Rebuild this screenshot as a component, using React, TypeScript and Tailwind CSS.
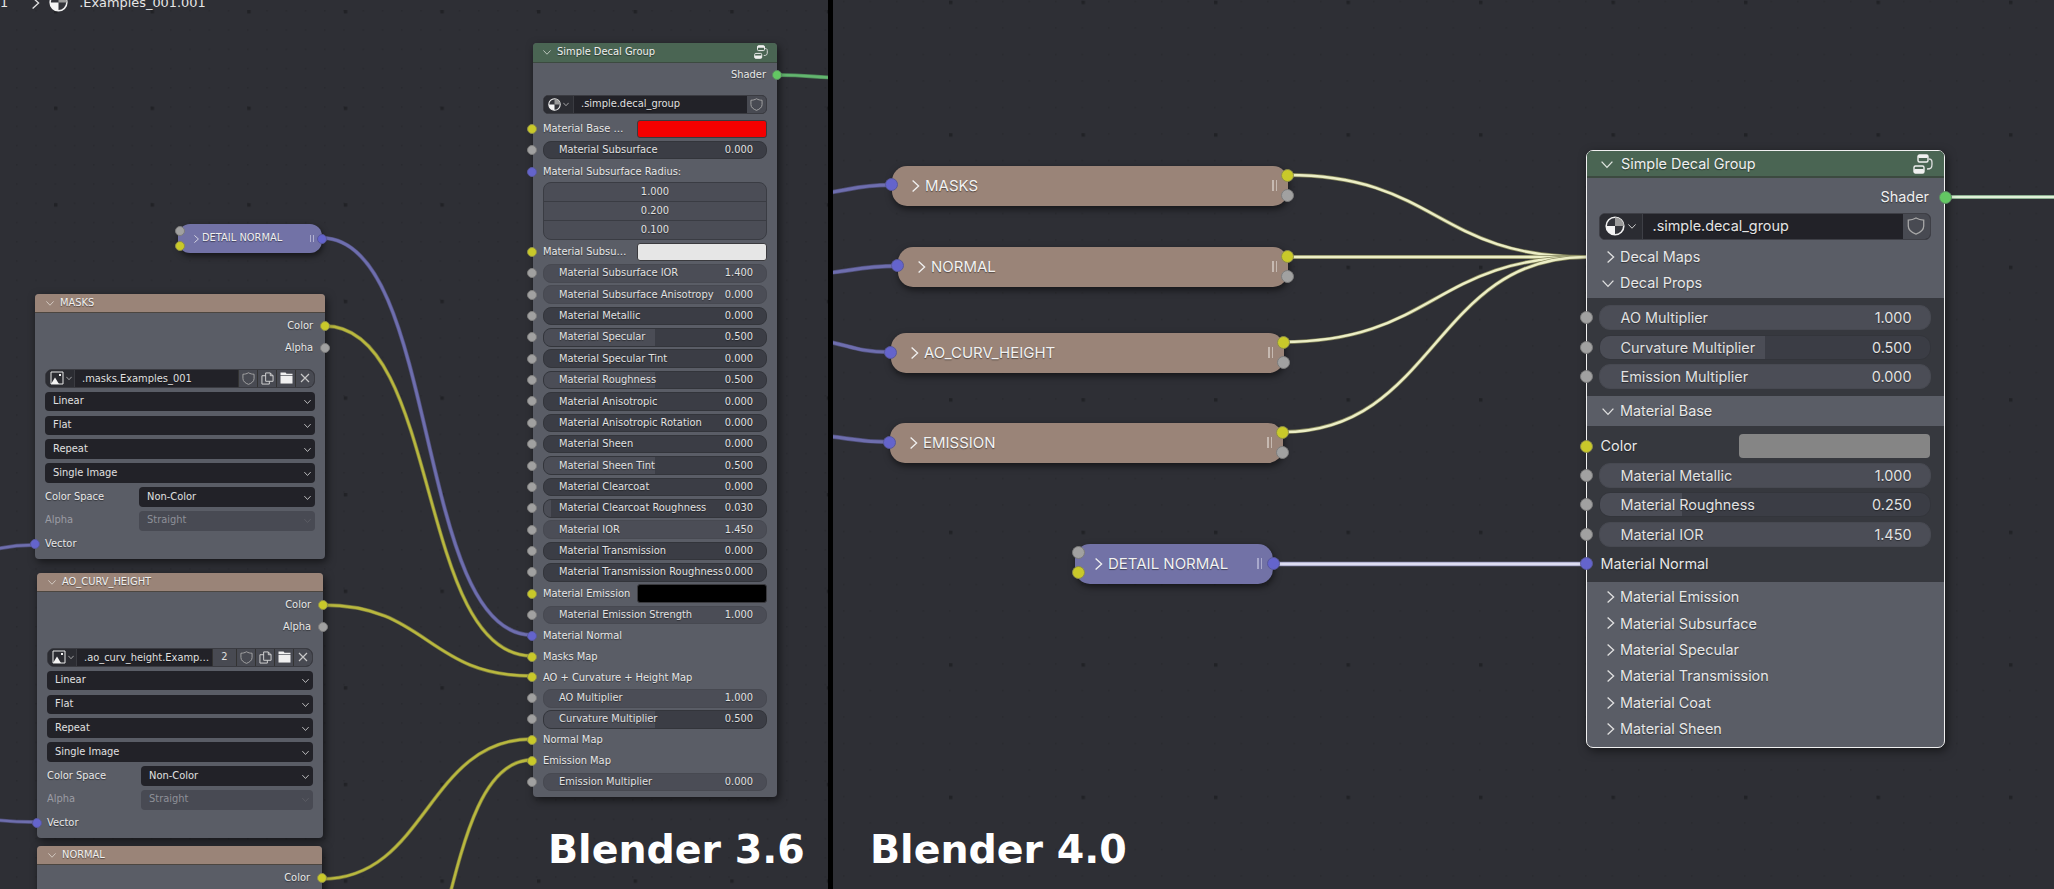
import React from "react";

const DJ = "font-['DejaVu_Sans',sans-serif]";
const IN = "font-['Inter',sans-serif]";
const SH = "[text-shadow:0_1px_1px_rgba(0,0,0,0.45)]";

type Sc = "y" | "g" | "b" | "n";
const sockColor: Record<Sc, string> = {
  y: "bg-[#c9c92a] border-[#8d8d4a]",
  g: "bg-[#a1a1a1] border-[#7c7c7c]",
  b: "bg-[#6464cc] border-[#58589a]",
  n: "bg-[#63c763] border-[#5a8a62]",
};

function Sock({ c, big, className }: { c: Sc; big?: boolean; className: string }) {
  return <span className={`absolute rounded-full border ${big ? "w-[13px] h-[13px]" : "w-[10px] h-[10px]"} ${sockColor[c]} ${className}`} />;
}

function Chev({ right, className, size = 9, color = "#d8d8d8" }: { right?: boolean; className?: string; size?: number; color?: string }) {
  return (
    <svg width={size} height={size} viewBox="0 0 10 10" className={className} fill="none" stroke={color} strokeWidth="1.1">
      {right ? <path d="M3 0.5 L8 5 L3 9.5" /> : <path d="M0.5 3 L5 7.8 L9.5 3" />}
    </svg>
  );
}

function SphereIcon({ size, className }: { size: number; className?: string }) {
  return (
    <svg width={size} height={size} viewBox="0 0 20 20" className={className}>
      <circle cx="10" cy="10" r="8.8" fill="#33343a" stroke="#f0f0f0" strokeWidth="1.6" />
      <path d="M10 1.2 A8.8 8.8 0 0 1 18.8 10 H10 Z" fill="#9a9a9a" />
      <path d="M1.2 10 H10 V18.8 A8.8 8.8 0 0 1 1.2 10 Z" fill="#f4f4f4" />
    </svg>
  );
}

function ImageIcon() {
  return (
    <svg width="14" height="14" viewBox="0 0 14 14">
      <path d="M1 1 H13 V13 H1 Z" fill="none" stroke="#e8e8e8" strokeWidth="1" />
      <path d="M1 13 L5 6.5 L9 13 Z" fill="#f4f4f4" />
      <rect x="9" y="3" width="2" height="2" fill="#f4f4f4" />
    </svg>
  );
}

function Shield({ size = 13 }: { size?: number }) {
  return (
    <svg width={size} height={size} viewBox="0 0 14 14" fill="none" stroke="#a8a8a8" strokeWidth="1">
      <path d="M7 0.8 C9 2 11 2.4 13 2.4 V7 C13 10 10.5 12 7 13.3 C3.5 12 1 10 1 7 V2.4 C3 2.4 5 2 7 0.8 Z" />
    </svg>
  );
}

function CopyIcon() {
  return (
    <svg width="13" height="13" viewBox="0 0 14 14" fill="none" stroke="#d8d8d8" strokeWidth="1">
      <path d="M5 1 H10 L13 4 V10 H5 Z" />
      <path d="M10 1 V4 H13" />
      <path d="M5 4 H1 V13 H9 V10" />
    </svg>
  );
}

function FolderIcon() {
  return (
    <svg width="13" height="12" viewBox="0 0 14 13">
      <path d="M0.5 0.5 H6 L7 2 H13.5 V3.2 H0.5 Z" fill="#f0f0f0" />
      <rect x="0.5" y="4" width="13" height="8.5" fill="#f0f0f0" />
    </svg>
  );
}

function XIcon() {
  return (
    <svg width="10" height="10" viewBox="0 0 10 10" stroke="#c8c8c8" strokeWidth="1.2">
      <path d="M1 1 L9 9 M9 1 L1 9" />
    </svg>
  );
}

function GroupIcon({ size }: { size: number }) {
  return (
    <svg width={size} height={size} viewBox="0 0 20 20" fill="none">
      <rect x="5" y="1" width="10" height="7" rx="1.5" fill="none" stroke="#f0f0f0" strokeWidth="1.4" />
      <rect x="5" y="1" width="10" height="3" rx="1.2" fill="#f0f0f0" />
      <rect x="1" y="12" width="10" height="7" rx="1.5" fill="none" stroke="#f0f0f0" strokeWidth="1.4" />
      <rect x="1" y="15" width="10" height="4" rx="1.2" fill="#f0f0f0" />
      <path d="M16 5 C19 5 19 7 19 10 C19 14 18 15 14 15" stroke="#e0e0e0" strokeWidth="1.3" />
    </svg>
  );
}

function Field({ label, value, kind, fill, h, tx, vx, text }: { label: string; value: string; kind: "light" | "dark"; fill?: string; h: string; tx: string; vx: string; text: string }) {
  return (
    <div className={`relative flex w-full items-center justify-between overflow-hidden border ${h} ${tx} ${vx} ${text} text-[#e2e2e2] ${SH} ${kind === "light" ? "bg-[#4b4d56] border-[#474951]" : "bg-[#3b3d45] border-[#33353b]"}`}>
      {fill && <div className={`absolute inset-y-0 left-0 bg-[#4b4d56] ${fill}`} />}
      <span className="relative top-[0.5px] whitespace-nowrap">{label}</span>
      <span className="relative top-[0.5px]">{value}</span>
    </div>
  );
}

/* ---------- Blender 3.6 pieces ---------- */

const OT = "text-[9.9px]";

function OldRow({ s, h, children }: { s?: Sc; h: string; children: React.ReactNode }) {
  return (
    <div className={`relative flex items-center px-[10px] ${h}`}>
      {s && <Sock c={s} className="left-[-6px]" />}
      {children}
    </div>
  );
}

function OldField(p: { s: Sc; label: string; value: string; kind: "light" | "dark"; fill?: string; h: string }) {
  return (
    <OldRow s={p.s} h={p.h}>
      <Field label={p.label} value={p.value} kind={p.kind} fill={p.fill} h="h-[18.5px] rounded-[8px]" tx="pl-[15px]" vx="pr-[13px]" text={OT} />
    </OldRow>
  );
}

function Label({ children, className = "" }: { children: React.ReactNode; className?: string }) {
  return <span className={`relative top-[0.5px] ${OT} text-[#e8e8e8] whitespace-nowrap ${SH} ${className}`}>{children}</span>;
}

function Swatch({ label, color }: { label: string; color: string }) {
  return (
    <OldRow s="y" h="h-[21.37px]">
      <Label className="w-[94px] shrink-0">{label}</Label>
      <div className={`h-[18.5px] flex-1 rounded-[3px] border border-[#3a3a3e] ${color}`} />
    </OldRow>
  );
}

function Select({ children, chev = "#e8e8e8", dim, className = "w-full" }: { children: React.ReactNode; chev?: string; dim?: boolean; className?: string }) {
  return (
    <div className={`flex h-[19.7px] items-center justify-between rounded-[4px] pl-[8px] pr-[3px] ${OT} ${dim ? "bg-[#484a53] text-[#8e9098]" : "bg-[#222228] text-[#e0e0e0]"} ${className}`}>
      <span>{children}</span>
      <Chev size={7} color={chev} className="mr-[1px]" />
    </div>
  );
}

function ImageNode({ title, pos, file, users, sockX = "right-[-5px]" }: { title: string; pos: string; file: string; users?: string; sockX?: string }) {
  const sel = ["Linear", "Flat", "Repeat", "Single Image"];
  return (
    <div className={`absolute ${pos} ${DJ} rounded-[4px] bg-[#5a5d66] shadow-[2px_3px_8px_rgba(0,0,0,0.55)]`}>
      <div className={`flex h-[19px] items-center rounded-t-[4px] border-b border-[#4c4640] bg-[#9a8478] pl-[11px] ${OT} text-[#f0f0f0] ${SH}`}>
        <Chev size={8} color="#d8d0c8" className="mr-[6px]" />
        <span>{title}</span>
      </div>
      <div className="relative mt-[2.5px] flex h-[21.5px] items-center justify-end pr-[12px]">
        <Label>Color</Label>
        <Sock c="y" className={sockX} />
      </div>
      <div className="relative flex h-[21.5px] items-center justify-end pr-[12px]">
        <Label>Alpha</Label>
        <Sock c="g" className={sockX} />
      </div>
      <div className="flex flex-col gap-[4.2px] px-[10px] pt-[10px]">
        <div className={`flex h-[19px] overflow-hidden rounded-[7px] border border-[#3a3b41] bg-[#222228] ${OT} text-[#e0e0e0]`}>
          <div className="flex w-[28px] shrink-0 items-center justify-center gap-[2px] bg-[#2b2c32] pl-[2px]"><ImageIcon /><Chev size={6} color="#e0e0e0" /></div>
          <div className={`flex-1 whitespace-nowrap border-l border-[#3a3b41] pl-[7px] leading-[17px] ${SH}`}>{file}</div>
          {users && <div className="flex w-[24px] items-center justify-center border-l border-[#333] bg-[#484a52]">{users}</div>}
          <div className="flex w-[19px] items-center justify-center border-l border-[#333] bg-[#484a52]"><Shield /></div>
          <div className="flex w-[19px] items-center justify-center border-l border-[#333] bg-[#484a52]"><CopyIcon /></div>
          <div className="flex w-[19px] items-center justify-center border-l border-[#333] bg-[#484a52]"><FolderIcon /></div>
          <div className="flex w-[19px] items-center justify-center border-l border-[#333] bg-[#484a52]"><XIcon /></div>
        </div>
        {sel.map((s) => <Select key={s}>{s}</Select>)}
        <div className="flex items-center">
          <Label className="w-[94px] shrink-0">Color Space</Label>
          <Select className="flex-1">Non-Color</Select>
        </div>
        <div className="flex items-center">
          <span className={`w-[94px] shrink-0 ${OT} text-[#9a9ca4]`}>Alpha</span>
          <Select className="flex-1" dim chev="#60626a">Straight</Select>
        </div>
      </div>
      <div className="relative mt-[3px] flex h-[21px] items-center pl-[10px]">
        <Sock c="b" className="left-[-5px]" />
        <Label>Vector</Label>
      </div>
      <div className="h-[4.5px]" />
    </div>
  );
}

const topRows: { s: Sc; label: string; value: string; kind: "light" | "dark"; fill?: string }[] = [
  { s: "g", label: "Material Subsurface IOR", value: "1.400", kind: "light" },
  { s: "g", label: "Material Subsurface Anisotropy", value: "0.000", kind: "light" },
  { s: "g", label: "Material Metallic", value: "0.000", kind: "dark" },
  { s: "g", label: "Material Specular", value: "0.500", kind: "dark", fill: "w-1/2" },
  { s: "g", label: "Material Specular Tint", value: "0.000", kind: "dark" },
  { s: "g", label: "Material Roughness", value: "0.500", kind: "dark", fill: "w-1/2" },
  { s: "g", label: "Material Anisotropic", value: "0.000", kind: "dark" },
  { s: "g", label: "Material Anisotropic Rotation", value: "0.000", kind: "dark" },
  { s: "g", label: "Material Sheen", value: "0.000", kind: "dark" },
  { s: "g", label: "Material Sheen Tint", value: "0.500", kind: "dark", fill: "w-1/2" },
  { s: "g", label: "Material Clearcoat", value: "0.000", kind: "dark" },
  { s: "g", label: "Material Clearcoat Roughness", value: "0.030", kind: "dark", fill: "w-[3%]" },
  { s: "g", label: "Material IOR", value: "1.450", kind: "light" },
  { s: "g", label: "Material Transmission", value: "0.000", kind: "dark" },
  { s: "g", label: "Material Transmission Roughness", value: "0.000", kind: "dark" },
];

function OldDecal() {
  const h = "h-[21.37px]";
  const l = "h-[20.9px]";
  return (
    <div className={`absolute left-[533px] top-[43px] w-[244px] ${DJ} rounded-[4px] bg-[#5a5d66] pb-[4.5px] shadow-[2px_3px_8px_rgba(0,0,0,0.55)]`}>
      <div className={`flex h-[19.5px] items-center rounded-t-[4px] border-b border-[#3c4a40] bg-[#4a6553] pl-[10px] pr-[9px] ${OT} text-[#f0f0f0] ${SH}`}>
        <Chev size={8} color="#c8d0c8" className="mr-[6px]" />
        <span className="flex-1">Simple Decal Group</span>
        <GroupIcon size={14} />
      </div>
      <div className="relative mt-[2px] flex h-[21px] items-center justify-end pr-[11px]">
        <Label>Shader</Label>
        <Sock c="n" className="right-[-5px]" />
      </div>
      <div className={`mx-[10px] mt-[9.5px] flex h-[18.5px] overflow-hidden rounded-[5px] border border-[#3a3b41] bg-[#222228] ${OT} text-[#e0e0e0]`}>
        <div className="flex w-[29px] shrink-0 items-center justify-center gap-[2px] bg-[#2b2c32]"><SphereIcon size={13} /><Chev size={6} color="#e0e0e0" /></div>
        <div className={`flex-1 border-l border-[#3a3b41] pl-[7px] leading-[16px] ${SH}`}>.simple.decal_group</div>
        <div className="flex w-[19px] items-center justify-center bg-[#484a52]"><Shield /></div>
      </div>
      <div className="mt-[4.7px]" />
      <Swatch label="Material Base …" color="bg-[#f50000]" />
      <OldField s="g" label="Material Subsurface" value="0.000" kind="dark" h={h} />
      <OldRow s="b" h={h}><Label>Material Subsurface Radius:</Label></OldRow>
      <div className={`mx-[10px] flex h-[58px] flex-col overflow-hidden rounded-[8px] border border-[#3a3c43] bg-[#4b4d56] ${OT} text-[#e2e2e2]`}>
        {["1.000", "0.200", "0.100"].map((v, i) => (
          <div key={v} className={`flex flex-1 items-center justify-center ${SH} ${i ? "border-t border-[#3a3c43]" : ""}`}>{v}</div>
        ))}
      </div>
      <div className="mt-[1px]" />
      <Swatch label="Material Subsu…" color="bg-[#e6e6e6]" />
      {topRows.map((r) => <OldField key={r.label} {...r} h={h} />)}
      <Swatch label="Material Emission" color="bg-[#000000]" />
      <OldField s="g" label="Material Emission Strength" value="1.000" kind="light" h={l} />
      <OldRow s="b" h={l}><Label>Material Normal</Label></OldRow>
      <OldRow s="y" h={l}><Label>Masks Map</Label></OldRow>
      <OldRow s="y" h={l}><Label>AO + Curvature + Height Map</Label></OldRow>
      <OldField s="g" label="AO Multiplier" value="1.000" kind="light" h={l} />
      <OldField s="g" label="Curvature Multiplier" value="0.500" kind="dark" fill="w-1/2" h={l} />
      <OldRow s="y" h={l}><Label>Normal Map</Label></OldRow>
      <OldRow s="y" h={l}><Label>Emission Map</Label></OldRow>
      <OldField s="g" label="Emission Multiplier" value="0.000" kind="light" h={l} />
    </div>
  );
}

/* ---------- Blender 4.0 pieces ---------- */

const NT = "text-[14.4px]";

function Grip({ color }: { color: string }) {
  return <span className={`flex gap-[2px] ${color}`}><i className="block h-[11px] w-[1.5px] bg-current" /><i className="block h-[11px] w-[1.5px] bg-current" /></span>;
}

function Pill({ pos, bg, grip, label, children }: { pos: string; bg: string; grip: string; label: string; children: React.ReactNode }) {
  return (
    <div className={`absolute ${pos} ${bg} ${IN} flex h-[39.5px] items-center rounded-[15px] pl-[17px] pr-[11px] text-[15px] text-[#f2f2f2] shadow-[1px_3px_7px_rgba(0,0,0,0.55)]`}>
      <Chev right size={12} color="#f0f0f0" className="mr-[4px]" />
      <span className={`flex-1 whitespace-nowrap ${SH}`}>{label}</span>
      <Grip color={grip} />
      {children}
    </div>
  );
}

function NewField(p: { s: Sc; label: string; value: string; kind: "light" | "dark"; fill?: string }) {
  return (
    <div className="relative pl-[11.5px] pr-[13.5px]">
      <Sock c={p.s} big className="left-[-7.5px] top-[6px]" />
      <Field label={p.label} value={p.value} kind={p.kind} fill={p.fill} h="h-[25px] rounded-[11px]" tx="pl-[21px]" vx="pr-[18px]" text={NT} />
    </div>
  );
}

function Section({ label, open, h = "h-[26.4px]" }: { label: string; open?: boolean; h?: string }) {
  return (
    <div className={`flex items-center ${h} ${open ? "pl-[15px]" : "pl-[17px]"} ${NT} text-[#e8e8e8] ${SH}`}>
      <Chev right={!open} size={12} color="#e0e0e0" className={open ? "mr-[6px]" : "mr-[4px]"} />
      <span>{label}</span>
    </div>
  );
}

function NewDecal() {
  return (
    <div className={`absolute left-[753px] top-[150px] w-[359px] ${IN} rounded-[7px] border-[1.5px] border-[#f0f0f0] bg-[#5a5d66] shadow-[2px_3px_10px_rgba(0,0,0,0.5)]`}>
      <div className={`flex h-[27px] items-center rounded-t-[5px] border-b-2 border-[#3c4a40] bg-[#4a6553] pl-[14px] pr-[11px] ${NT} text-[#f0f0f0] ${SH}`}>
        <Chev size={12} color="#e0e6e0" className="mr-[8px]" />
        <span className="flex-1">Simple Decal Group</span>
        <GroupIcon size={20} />
      </div>
      <div className={`relative mt-[6px] flex h-[26px] items-center justify-end pr-[15px] ${NT} text-[#f0f0f0]`}>
        <span className={SH}>Shader</span>
        <Sock c="n" big className="right-[-7.5px]" />
      </div>
      <div className={`ml-[11.5px] mr-[13.5px] mt-[3px] flex h-[26.5px] overflow-hidden rounded-[6px] border border-[#3e3f46] bg-[#222228] ${NT} text-[#e4e4e4]`}>
        <div className="flex w-[42px] shrink-0 items-center justify-center gap-[3px] bg-[#2b2c32]"><SphereIcon size={20} /><Chev size={8} color="#e0e0e0" /></div>
        <div className={`flex-1 border-l border-[#3e3f46] pl-[10px] leading-[24px] ${SH}`}>.simple.decal_group</div>
        <div className="flex w-[27px] items-center justify-center bg-[#484a52]"><Shield size={18} /></div>
      </div>
      <div className="mt-[4.5px]" />
      <Section label="Decal Maps" h="h-[26px]" />
      <Section label="Decal Props" open h="h-[26px]" />
      <div className="mt-[2px] flex flex-col gap-[4.5px] bg-[#36383e] py-[7px]">
        <NewField s="g" label="AO Multiplier" value="1.000" kind="light" />
        <NewField s="g" label="Curvature Multiplier" value="0.500" kind="dark" fill="w-1/2" />
        <NewField s="g" label="Emission Multiplier" value="0.000" kind="light" />
      </div>
      <Section label="Material Base" open h="h-[30px]" />
      <div className="flex flex-col gap-[4.5px] bg-[#36383e] pb-[6px] pt-[8px]">
        <div className={`relative flex h-[24px] items-center pl-[13.5px] pr-[14px] ${NT} text-[#e8e8e8]`}>
          <Sock c="y" big className="left-[-7.5px]" />
          <span className={`flex-1 ${SH}`}>Color</span>
          <div className="h-full w-[191px] rounded-[4px] bg-[#858585]" />
        </div>
        <NewField s="g" label="Material Metallic" value="1.000" kind="light" />
        <NewField s="g" label="Material Roughness" value="0.250" kind="dark" fill="w-1/4" />
        <NewField s="g" label="Material IOR" value="1.450" kind="light" />
        <div className={`relative flex h-[25px] items-center pl-[13.5px] ${NT} text-[#e8e8e8]`}>
          <Sock c="b" big className="left-[-7.5px]" />
          <span className={SH}>Material Normal</span>
        </div>
      </div>
      <div className="mt-[1.8px] pb-[5px]">
        {["Material Emission", "Material Subsurface", "Material Specular", "Material Transmission", "Material Coat", "Material Sheen"].map((s) => (
          <Section key={s} label={s} />
        ))}
      </div>
    </div>
  );
}

/* ---------- wires ---------- */

function Wire({ a, b, core, edge, w = 2.4, f = 0.5 }: { a: [number, number]; b: [number, number]; core: string; edge: string; w?: number; f?: number }) {
  const d = (b[0] - a[0]) * f;
  const p = `M${a[0]} ${a[1]} C${a[0] + d} ${a[1]} ${b[0] - d} ${b[1]} ${b[0]} ${b[1]}`;
  return (
    <g fill="none">
      <path d={p} stroke={edge} strokeWidth={w + 1.4} />
      <path d={p} stroke={core} strokeWidth={w} />
    </g>
  );
}

function Dots({ id, small, big, sx, sy, bx, by }: { id: string; small: number; big: number; sx: number; sy: number; bx: number; by: number }) {
  return (
    <>
      <defs>
        <pattern id={id + "s"} width={small} height={small} patternUnits="userSpaceOnUse" x={sx} y={sy}>
          <rect width="1.6" height="1.6" fill="#292a2f" />
        </pattern>
        <pattern id={id + "b"} width={big} height={big} patternUnits="userSpaceOnUse" x={bx} y={by}>
          <rect width="3.5" height="3.5" fill="#212226" />
        </pattern>
      </defs>
      <rect width="100%" height="100%" fill={`url(#${id}s)`} />
      <rect width="100%" height="100%" fill={`url(#${id}b)`} />
    </>
  );
}

export default function App() {
  const Y = "#b9b83e";
  const YE = "#77773f";
  const P = "#6e6eae";
  const PE = "#50507a";
  const C = "#eceec6";
  const CE = "#85865c";
  const BR = "text-[#c6b9b1]";
  return (
    <div className="flex h-[889px] w-[2054px] overflow-hidden bg-black">
      {/* Blender 3.6 */}
      <div className="relative h-full w-[828px] shrink-0 overflow-hidden bg-[#2e2f35]">
        <svg className="absolute inset-0 h-full w-full">
          <Dots id="l" small={19.25} big={96.6} sx={16} sy={10} bx={54} by={10} />
          <Wire a={[322, 238]} b={[532, 635]} core={P} edge={PE} w={2.8} f={0.56} />
          <Wire a={[325, 326]} b={[532, 656]} core={Y} edge={YE} f={0.56} />
          <Wire a={[323, 605]} b={[532, 676]} core={Y} edge={YE} />
          <Wire a={[322, 879]} b={[532, 739]} core={Y} edge={YE} />
          <Wire a={[360, 1060]} b={[532, 760]} core={Y} edge={YE} f={0.56} />
          <Wire a={[-40, 553]} b={[33, 545]} core={P} edge={PE} />
          <Wire a={[-40, 818]} b={[33, 822]} core={P} edge={PE} />
          <Wire a={[777, 75]} b={[850, 78]} core="#63b66f" edge="#4f8a5a" />
        </svg>

        <div className={`absolute left-0 top-[-9px] flex h-[24px] items-center text-[12.9px] leading-none text-[#e6e6e6] ${DJ}`}>
          <span>1</span>
          <Chev right size={12} color="#e0e0e0" className="ml-[21px] mr-[8px]" />
          <SphereIcon size={19} className="mt-[-2px]" />
          <span className="ml-[11px]">.Examples_001.001</span>
        </div>

        <div className={`absolute left-[178px] top-[224px] flex h-[29px] w-[144px] items-center rounded-[12px] bg-[#7272a6] pl-[14px] pr-[8px] ${OT} text-[#f0f0f0] shadow-[1px_3px_6px_rgba(0,0,0,0.55)] ${DJ}`}>
          <Sock c="g" className="left-[-3px] top-[1.5px]" />
          <Sock c="y" className="left-[-3px] top-[16.5px]" />
          <Chev right size={8} color="#e0e0ea" className="mr-[2px]" />
          <span className={`flex-1 ${SH}`}>DETAIL NORMAL</span>
          <span className="flex gap-[1.5px] text-[#b0b0d0]"><i className="block h-[7px] w-[1.5px] bg-current" /><i className="block h-[7px] w-[1.5px] bg-current" /></span>
          <Sock c="b" className="right-[-5px]" />
        </div>

        <ImageNode title="MASKS" pos="left-[35px] top-[294px] w-[290px]" file=".masks.Examples_001" />
        <ImageNode title="AO_CURV_HEIGHT" pos="left-[37px] top-[573px] w-[286px]" file=".ao_curv_height.Examp…" users="2" />
        <ImageNode title="NORMAL" pos="left-[37px] top-[846px] w-[285px]" file=".normal.Examples_001" />
        <OldDecal />
        <span className={`absolute left-[548px] top-[830px] text-[39.5px] font-bold leading-none text-white ${DJ}`}>Blender 3.6</span>
      </div>

      {/* Blender 4.0 */}
      <div className="relative ml-[5px] h-full flex-1 overflow-hidden bg-[#2e2f35]">
        <svg className="absolute inset-0 h-full w-full">
          <Dots id="r" small={26.5} big={132.5} sx={10} sy={0.7} bx={116} by={0.7} />
          <Wire a={[-30, 194]} b={[58, 185]} core={P} edge={PE} w={3} />
          <Wire a={[-30, 274]} b={[65, 266]} core={P} edge={PE} w={3} />
          <Wire a={[-30, 340]} b={[57, 352]} core={P} edge={PE} w={3} />
          <Wire a={[-30, 435]} b={[56, 442]} core={P} edge={PE} w={3} />
          <Wire a={[454, 175]} b={[753, 257]} core={C} edge={CE} />
          <Wire a={[454, 257]} b={[753, 257]} core={C} edge={CE} />
          <Wire a={[449, 342]} b={[753, 257]} core={C} edge={CE} />
          <Wire a={[450, 432]} b={[753, 257]} core={C} edge={CE} />
          <Wire a={[440, 564]} b={[753, 564]} core="#dedef2" edge="#8a8ab0" w={3} />
          <Wire a={[1112, 197]} b={[1260, 197]} core="#dff0d8" edge="#6f9a78" />
        </svg>

        <Pill pos="left-[59px] top-[166px] w-[396px]" bg="bg-[#9a8478]" grip={BR} label="MASKS">
          <Sock c="b" big className="left-[-7px] top-[12px]" />
          <Sock c="y" big className="right-[-6px] top-[2.5px]" />
          <Sock c="g" big className="right-[-6px] top-[22.5px]" />
        </Pill>
        <Pill pos="left-[65px] top-[247px] w-[390px]" bg="bg-[#9a8478]" grip={BR} label="NORMAL">
          <Sock c="b" big className="left-[-7px] top-[12px]" />
          <Sock c="y" big className="right-[-6px] top-[3px]" />
          <Sock c="g" big className="right-[-6px] top-[23px]" />
        </Pill>
        <Pill pos="left-[58px] top-[333px] w-[393px]" bg="bg-[#9a8478]" grip={BR} label="AO_CURV_HEIGHT">
          <Sock c="b" big className="left-[-7px] top-[12.5px]" />
          <Sock c="y" big className="right-[-6px] top-[2.5px]" />
          <Sock c="g" big className="right-[-6px] top-[22.5px]" />
        </Pill>
        <Pill pos="left-[57px] top-[423px] w-[393px]" bg="bg-[#9a8478]" grip={BR} label="EMISSION">
          <Sock c="b" big className="left-[-7px] top-[12.5px]" />
          <Sock c="y" big className="right-[-6px] top-[2.5px]" />
          <Sock c="g" big className="right-[-6px] top-[22.5px]" />
        </Pill>
        <Pill pos="left-[242px] top-[544px] w-[198px]" bg="bg-[#7272a6]" grip="text-[#a8a8cc]" label="DETAIL NORMAL">
          <Sock c="g" big className="left-[-3.5px] top-[2px]" />
          <Sock c="y" big className="left-[-3.5px] top-[22px]" />
          <Sock c="b" big className="right-[-6.5px] top-[13px]" />
        </Pill>
        <NewDecal />
        <span className={`absolute left-[37px] top-[830px] text-[39.5px] font-bold leading-none text-white ${DJ}`}>Blender 4.0</span>
      </div>
    </div>
  );
}
